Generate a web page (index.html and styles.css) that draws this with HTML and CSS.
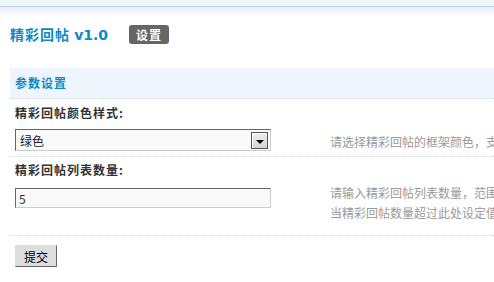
FILE: index.html
```html
<!DOCTYPE html>
<html lang="zh-CN">
<head>
<meta charset="utf-8">
<title>精彩回帖 v1.0</title>
<link rel="stylesheet" href="styles.css">
</head>
<body>
<div class="topband"></div>
<div class="fade"></div>
<div class="titlebar">
  <h3 class="title">精彩回帖 <span class="ver">v1.0</span></h3>
  <span class="badge">设置</span>
</div>
<form class="panel">
  <div class="sechead">参数设置</div>
  <div class="label">精彩回帖颜色样式:</div>
  <div class="ctrlrow r1">
    <div class="ctrl">
      <div class="selwrap">
        <select class="sel"><option>绿色</option></select>
        <span class="arrow"><span class="tri"></span></span>
      </div>
    </div>
    <div class="hint h1">请选择精彩回帖的框架颜色，支</div>
  </div>
  <div class="label l2">精彩回帖列表数量:</div>
  <div class="ctrlrow r2">
    <div class="ctrl">
      <input class="txt" type="text" value="5">
    </div>
    <div class="hint h2">
      <div>请输入精彩回帖列表数量，范围</div>
      <div>当精彩回帖数量超过此处设定值</div>
    </div>
  </div>
  <div class="btnrow">
    <button class="btn" type="button">提交</button>
  </div>
</form>
</body>
</html>
```
FILE: styles.css
```css
html, body {
  margin: 0;
  padding: 0;
  background: #fff;
  overflow: hidden;
}
body {
  font-family: "Noto Sans CJK SC", "DejaVu Sans", sans-serif;
  font-size: 12px;
  color: #333;
  width: 494px;
}
.topband {
  height: 6px;
  background: #f0f7fb;
  border-bottom: 1px solid #bcd3da;
}
.fade {
  height: 10px;
  background: linear-gradient(#e5f1f8, #ffffff);
}
.titlebar {
  display: flex;
  align-items: center;
  padding: 7px 0 0 10px;
  height: 20px;
}
.title {
  margin: 0;
  font-size: 14px;
  font-weight: bold;
  color: #0b8ac8;
  line-height: 20px;
  font-family: "Noto Sans CJK SC", "DejaVu Sans", sans-serif;
  letter-spacing: 1px;
}
.ver {
  font-family: "DejaVu Sans", sans-serif;
  letter-spacing: 0;
  font-size: 14px;
}
.badge {
  margin-left: 21px;
  width: 40px;
  height: 19px;
  line-height: 19px;
  text-align: center;
  background: #666;
  color: #fff;
  font-weight: bold;
  font-size: 12px;
  letter-spacing: 1px;
  border-radius: 3px;
}
.panel {
  margin: 24px 0 0 10px;
  width: 600px;
}
.sechead {
  height: 30px;
  line-height: 30px;
  padding-left: 5px;
  background: #eef5fc;
  color: #0b8ac8;
  font-weight: bold;
  letter-spacing: 1px;
  border-bottom: 1px dotted #c5dde9;
}
.label {
  padding: 5px 5px 5px;
  line-height: 18px;
  font-weight: bold;
  color: #333;
  letter-spacing: 1px;
}
.label.l2 {
  padding: 4px 5px 4px;
}
.ctrlrow {
  display: flex;
  align-items: flex-start;
  border-bottom: 1px dotted #c5dde9;
}
.ctrlrow.r1 {
  padding-bottom: 4px;
}
.ctrlrow.r2 {
  padding-bottom: 12px;
}
.ctrl {
  width: 315px;
  padding-left: 5px;
  flex: none;
}
.r1 .ctrl {
  padding-top: 2px;
}
.r2 .ctrl {
  padding-top: 5px;
}
.hint {
  color: #999;
  line-height: 20px;
  white-space: nowrap;
}
.hint.h1 {
  padding-top: 5px;
}
.selwrap {
  position: relative;
  width: 256px;
  height: 22px;
}
.sel {
  -webkit-appearance: none;
  appearance: none;
  box-sizing: border-box;
  width: 256px;
  height: 22px;
  margin: 0;
  padding: 0 0 0 4px;
  font-family: "Noto Sans CJK SC", "DejaVu Sans", sans-serif;
  font-size: 12px;
  color: #222;
  background: #fafafa;
  border-style: solid;
  border-width: 1px;
  border-color: #666 #ccc #ccc #666;
  border-radius: 0;
  outline: none;
}
.arrow {
  position: absolute;
  right: 3px;
  top: 3px;
  box-sizing: border-box;
  width: 17px;
  height: 17px;
  border: 1px solid #555;
  background: linear-gradient(#eeeeee, #d4d4d4);
  box-shadow: inset 1px 1px 0 #fff;
  pointer-events: none;
  display: flex;
  align-items: center;
  justify-content: center;
}
.tri {
  width: 0;
  height: 0;
  border-left: 4px solid transparent;
  border-right: 4px solid transparent;
  border-top: 4px solid #000;
  margin-top: 2px;
}
.txt {
  box-sizing: border-box;
  width: 256px;
  height: 20px;
  margin: 0;
  padding: 0 0 0 3px;
  font-family: "Noto Sans CJK SC", "DejaVu Sans", sans-serif;
  font-size: 12px;
  color: #333;
  background: #f9f9f9;
  border-style: solid;
  border-width: 1px;
  border-color: #666 #ccc #ccc #666;
  outline: none;
}
.btnrow {
  padding: 9px 0 0 5px;
}
.btn {
  box-sizing: border-box;
  width: 42px;
  height: 22px;
  margin: 0;
  padding: 0;
  font-family: "Noto Sans CJK SC", "DejaVu Sans", sans-serif;
  font-size: 12px;
  color: #000;
  background: #ddd;
  border-style: solid;
  border-width: 1px;
  border-color: #ddd #666 #666 #ddd;
  border-radius: 0;
}
```
